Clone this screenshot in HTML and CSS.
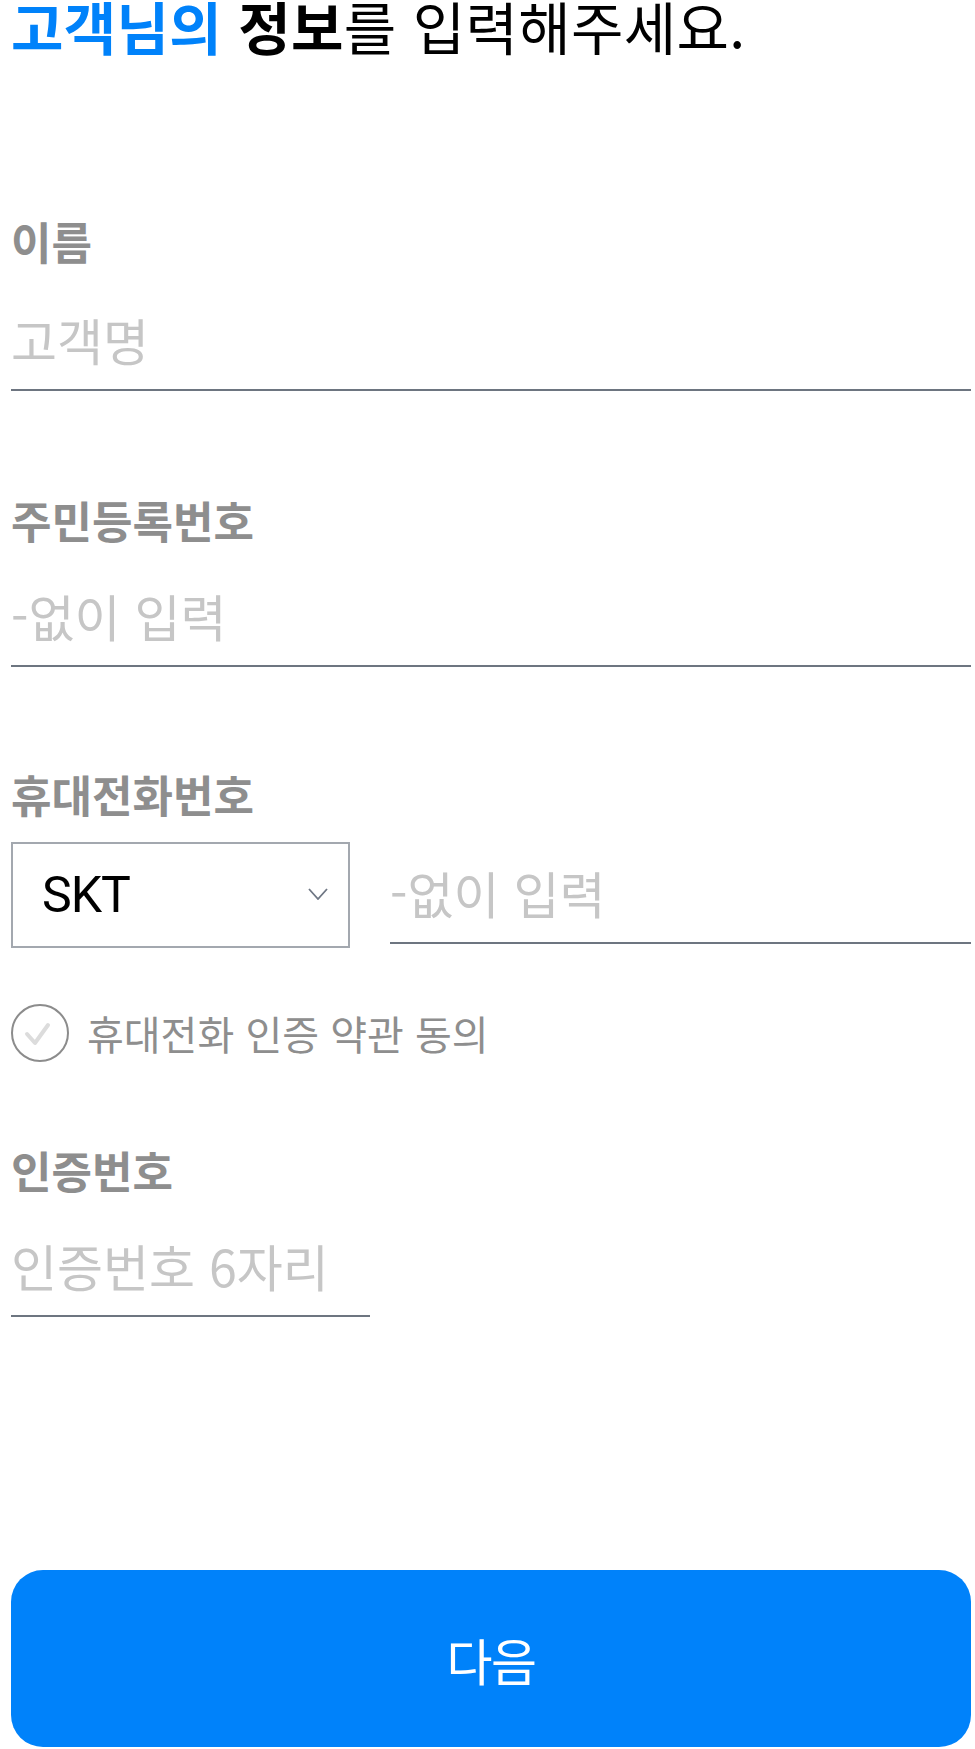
FILE: index.html
```html
<!DOCTYPE html>
<html lang="ko">
<head>
<meta charset="utf-8">
<title>고객 정보 입력</title>
<link rel="stylesheet" href="styles.css">
</head>
<body>
<main class="page">
  <h1 class="title"><span class="title-em">고객님의</span> <strong>정보</strong>를 입력해주세요.</h1>

  <section class="field field-name">
    <label class="label" for="name">이름</label>
    <input class="input input-first" id="name" type="text" placeholder="고객명">
  </section>

  <section class="field field-rrn">
    <label class="label" for="rrn">주민등록번호</label>
    <input class="input" id="rrn" type="text" placeholder="-없이 입력">
  </section>

  <section class="field field-phone">
    <label class="label" for="phone">휴대전화번호</label>
    <div class="phone-row">
      <div class="select">
        <span class="select-value">SKT</span>
        <svg class="chevron" width="20" height="12" viewBox="0 0 20 12"><path d="M1 1 L10 11 L19 1" fill="none" stroke="#6f7784" stroke-width="1.8"/></svg>
      </div>
      <input class="input input-phone" id="phone" type="text" placeholder="-없이 입력">
    </div>
  </section>

  <div class="agree">
    <span class="check">
      <svg width="54" height="54" viewBox="0 0 54 54"><path d="M14 28 L22 37 L35 19" fill="none" stroke="#dcdcdc" stroke-width="4" stroke-linecap="round" stroke-linejoin="round"/></svg>
    </span>
    <span class="agree-text">휴대전화 인증 약관 동의</span>
  </div>

  <section class="field field-code">
    <label class="label" for="code">인증번호</label>
    <input class="input input-code" id="code" type="text" placeholder="인증번호 6자리">
  </section>

  <button class="next" type="button">다음</button>
</main>
</body>
</html>
```

FILE: styles.css
```css
* { box-sizing: border-box; }

html, body {
  margin: 0;
  background: #fff;
}

body {
  font-family: "Noto Sans CJK KR", "Noto Sans", sans-serif;
}

.page {
  display: flex;
  flex-direction: column;
  min-height: 100vh;
  padding: 0 4px 2px 11px;
}

.title {
  margin: 0;
  font-size: 57px;
  line-height: 50px;
  letter-spacing: 0.3px;
  font-weight: 400;
  color: #000;
  white-space: nowrap;
}

.title-em {
  color: #0082fa;
  font-weight: 700;
}

.title strong {
  font-weight: 700;
}

.field {
  display: flex;
  flex-direction: column;
}

.field-name { margin-top: 167px; }
.field-rrn { margin-top: 105px; }
.field-phone { margin-top: 103px; }
.field-code { margin-top: 84px; }

.label {
  font-size: 44px;
  line-height: 48px;
  letter-spacing: 0;
  font-weight: 700;
  color: #8e8e8e;
}

.input {
  display: block;
  width: 100%;
  height: 123px;
  margin: 0;
  padding: 20px 0 0;
  border: 0;
  border-bottom: 2px solid #6d7580;
  border-radius: 0;
  background: transparent;
  outline: none;
  font-family: inherit;
  font-size: 50px;
  letter-spacing: 0;
  color: #000;
}

.input-first {
  height: 126px;
  padding-top: 24px;
}

.input::placeholder {
  color: #c6c6c6;
  opacity: 1;
}

.phone-row {
  display: flex;
  gap: 40px;
  margin-top: 24px;
}

.select {
  flex: 0 0 339px;
  height: 106px;
  display: flex;
  align-items: center;
  justify-content: space-between;
  padding: 0 20px 0 29px;
  border: 2px solid #a3a8af;
}

.select-value {
  font-family: Roboto, "Liberation Sans", sans-serif;
  font-size: 50px;
  letter-spacing: -1px;
  color: #000;
}

.chevron {
  margin-top: -2px;
}

.input-phone {
  flex: 1;
  height: 102px;
  padding: 0;
}

.agree {
  display: flex;
  align-items: center;
  gap: 18px;
  margin-top: 56px;
}

.check {
  width: 58px;
  height: 58px;
  border: 2px solid #8c8c8c;
  border-radius: 50%;
  display: flex;
  align-items: center;
  justify-content: center;
}

.agree-text {
  font-size: 40px;
  letter-spacing: 0;
  color: #8e8e8e;
}

.input-code {
  width: 359px;
}

.next {
  margin-top: auto;
  height: 177px;
  width: 100%;
  border: 0;
  border-radius: 32px;
  background: #0082fa;
  color: #fff;
  font-family: inherit;
  font-size: 50px;
  letter-spacing: -1.5px;
}
```
